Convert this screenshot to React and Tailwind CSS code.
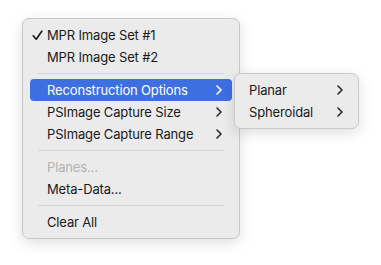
import React from "react"

function Chevron({ className }) {
  return (
    <svg className={className} width="6" height="10" viewBox="0 0 6 10" fill="none">
      <path d="M1 1l4 4-4 4" stroke="currentColor" strokeWidth="1.6" strokeLinecap="round" strokeLinejoin="round" />
    </svg>
  )
}

function Check() {
  return (
    <svg className="absolute left-[-15px] top-[1px]" width="11" height="11" viewBox="0 0 11 11" fill="none">
      <path d="M1.2 5.8l3 3.4L9.8 1.2" stroke="#1d1d1d" strokeWidth="1.7" strokeLinecap="round" strokeLinejoin="round" />
    </svg>
  )
}

function Item({ label, check, sub, active, disabled }) {
  const base = "flex items-center h-[22px] mx-[7px] pl-[17px] pr-[10px] rounded-[4px]"
  const tone = active ? "bg-[#3d6fe0] text-white" : disabled ? "text-[#b3b3b3]" : "text-[#1a1a1a]"
  return (
    <div className={`${base} ${tone}`}>
      <span className="relative flex-1">
        {check && <Check />}
        {label}
      </span>
      {sub && <Chevron className={active ? "text-white" : "text-[#2a2a2a]"} />}
    </div>
  )
}

function Separator() {
  return (
    <div className="h-[11px] flex items-center px-[15px]">
      <div className="h-px w-full bg-[#d2d2d2]" />
    </div>
  )
}

export default function App() {
  return (
    <div className="w-[381px] h-[265px] bg-white pl-[22px] pt-[18px] font-['Inter','Liberation_Sans',sans-serif] text-[13px] tracking-[-0.15px] leading-none">
      <div className="relative w-[218px] rounded-[7px] border border-[#c9c9c9] bg-[#ebebeb] py-[5px] shadow-[0_4px_14px_rgba(0,0,0,0.13)]">
        <Item label="MPR Image Set #1" check />
        <Item label="MPR Image Set #2" />
        <Separator />
        <Item label="Reconstruction Options" sub active />
        <Item label="PSImage Capture Size" sub />
        <Item label="PSImage Capture Range" sub />
        <Separator />
        <Item label="Planes..." disabled />
        <Item label="Meta-Data..." />
        <Separator />
        <Item label="Clear All" />

        <div className="absolute left-[211px] top-[54px] w-[125px] rounded-[7px] border border-[#c9c9c9] bg-[#ebebeb] py-[5px] shadow-[0_4px_14px_rgba(0,0,0,0.13)]">
          <div className="flex items-center h-[22px] pl-[14px] pr-[15px] text-[#1a1a1a]">
            <span className="flex-1">Planar</span>
            <Chevron className="text-[#2a2a2a]" />
          </div>
          <div className="flex items-center h-[22px] pl-[14px] pr-[15px] text-[#1a1a1a]">
            <span className="flex-1">Spheroidal</span>
            <Chevron className="text-[#2a2a2a]" />
          </div>
        </div>
      </div>
    </div>
  )
}
